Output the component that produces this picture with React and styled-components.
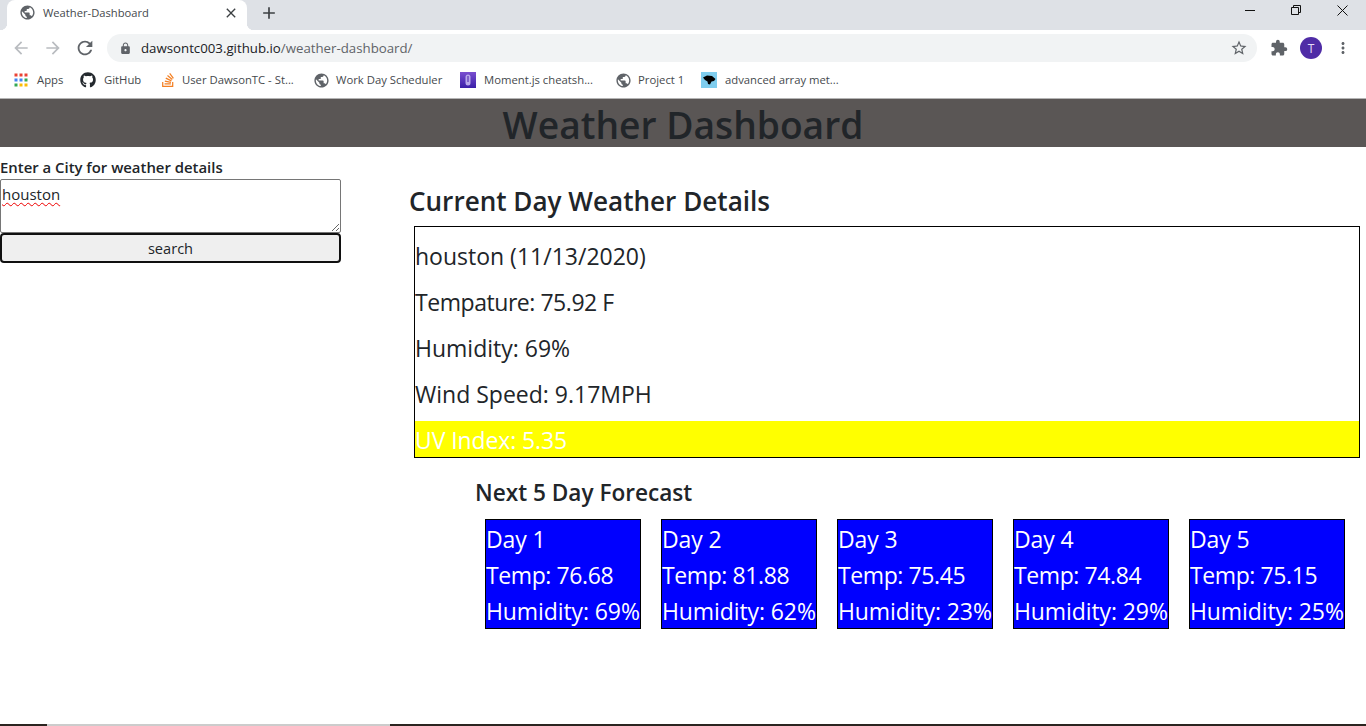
import React from 'react';
import styled, { createGlobalStyle } from 'styled-components';
import { FaGithub, FaStackOverflow } from 'react-icons/fa';
import { MdPublic, MdExtension, MdLock, MdStarBorder, MdRefresh, MdArrowBack, MdArrowForward, MdMoreVert, MdAdd, MdClose } from 'react-icons/md';

const Global = createGlobalStyle`
  html, body { margin: 0; padding: 0; height: 726px; overflow: hidden; background: #fff; }
  * { box-sizing: border-box; }
  body { font-family: "Open Sans", "Noto Sans", sans-serif; color: #212529; }
`;
const Screen = styled.div`display:flex;flex-direction:column;width:1366px;height:726px;overflow:hidden;`;
const TabStrip = styled.div`display:flex;align-items:flex-end;height:30px;background:#dee1e6;padding-left:7px;flex:none;`;
const Tab = styled.div`
  position:relative;display:flex;align-items:center;width:240px;height:30px;background:#fff;border-radius:8px 8px 0 0;padding:0 8px 5px 12px;color:#45494d;font-size:11.2px;
  &::before,&::after{content:"";position:absolute;bottom:0;width:7px;height:7px;}
  &::before{left:-7px;background:radial-gradient(circle at 0 0,transparent 7px,#fff 7.5px);}
  &::after{right:-7px;background:radial-gradient(circle at 100% 0,transparent 7px,#fff 7.5px);}
`;
const TabTitle = styled.span`flex:1;margin-left:7px;`;
const NewTab = styled.div`display:flex;align-items:center;margin:0 0 4px 12px;color:#3c4043;height:26px;`;
const WindowControls = styled.div`margin-left:auto;display:flex;align-self:flex-start;align-items:center;height:20px;padding-right:1px;`;
const WinBtn = styled.div`width:46px;height:20px;display:flex;align-items:center;justify-content:center;`;
const Toolbar = styled.div`display:flex;align-items:center;height:36px;background:#fff;padding:0 0 0 5px;flex:none;`;
const NavBtn = styled.div`display:flex;width:32px;justify-content:center;color:${p => p.$off ? '#b9bcc0' : '#5f6368'};`;
const Address = styled.div`display:flex;align-items:center;width:1150px;height:28px;margin-left:6px;border-radius:14px;background:#f1f3f4;padding:0 9px 0 12px;font-size:13.25px;`;
const Url = styled.span`margin-left:9px;flex:1;color:#202124;`;
const UrlPath = styled.span`color:#5f6368;`;
const Avatar = styled.div`width:22px;height:22px;border-radius:50%;background:#4f2ca6;color:#e6dcf8;font-size:12px;display:flex;align-items:center;justify-content:center;margin:0 12px 0 12px;`;
const ExtBtn = styled.div`display:flex;color:#5f6368;margin-left:${p => p.$ml || 0}px;`;
const Bookmarks = styled.div`display:flex;align-items:center;height:33px;background:#fff;padding:0 0 4px 14px;border-bottom:1px solid #b4b4b4;flex:none;font-size:11.3px;color:#45494d;`;
const Bookmark = styled.div`display:flex;align-items:center;gap:${p => p.$gap || 8}px;width:${p => p.$w}px;white-space:nowrap;flex:none;`;
const BookmarkLabel = styled.span`margin-bottom:2px;`;
const Main = styled.div`flex:1;display:flex;flex-direction:column;min-height:0;`;
const Banner = styled.header`height:48px;background:#5a5655;flex:none;text-align:center;`;
const H1 = styled.h1`margin:0;font-size:37.2px;font-weight:600;line-height:52px;color:#212529;`;
const Columns = styled.div`display:flex;flex:1;min-height:0;`;
const Side = styled.aside`width:341px;flex:none;padding-top:9px;`;
const Label = styled.label`display:block;font-size:14.9px;font-weight:600;line-height:22px;margin-bottom:1px;`;
const Input = styled.textarea`display:block;width:341px;height:54px;margin:0;padding:4px 1px 2px;border:1px solid #767676;border-radius:2px;font:15px/20px "Open Sans",sans-serif;color:#212529;text-decoration:underline wavy #e00 1px;text-underline-offset:2px;outline:none;`;
const SearchBtn = styled.button`display:block;width:341px;height:30px;margin:0;padding:0;background:#efefef;border:2px solid #101010;border-radius:4px;font:14.6px "Open Sans",sans-serif;color:#212529;`;
const Content = styled.section`flex:1;padding:0 6px 0 68px;`;
const H3 = styled.h3`margin:35px 0 6px;font-size:26.1px;font-weight:600;line-height:38px;`;
const Details = styled.div`margin-left:5px;height:232px;border:1px solid #000;padding-top:10px;overflow:hidden;`;
const Line = styled.div`font-size:23px;height:36px;line-height:38px;margin-bottom:10px;letter-spacing:${p => p.$ls || 0}px;`;
const UvLine = styled(Line)`background:#ff0;color:#fff;margin:0;letter-spacing:-.1px;`;
const Forecast = styled.div`padding-left:66px;`;
const H4 = styled.h4`margin:19px 0 10px;font-size:22.6px;font-weight:600;line-height:32px;`;
const Cards = styled.div`display:flex;gap:20px;margin-left:10px;`;
const Card = styled.div`width:156px;height:110px;padding-top:1px;background:#00f;border:1px solid #000;color:#fff;font-size:23px;letter-spacing:-.1px;line-height:36px;white-space:nowrap;overflow:hidden;`;
const CardTemp = styled.div`letter-spacing:-.4px;`;
const Taskbar = styled.div`height:2px;flex:none;background:#2b2520;display:flex;`;
const TaskGap = styled.div`width:343px;margin-left:47px;background:#ccc;`;
const AppsGrid = styled.svg`width:14px;height:14px;flex:none;`;

const colors = ['#ea4335','#ea4335','#ea4335','#4285f4','#4285f4','#34a853','#34a853','#fbbc05','#fbbc05'];
const Apps = () => (
  <AppsGrid viewBox="0 0 14 14">
    {colors.map((c, i) => <rect key={i} x={(i % 3) * 5 + .5} y={Math.floor(i / 3) * 5 + .5} width="3" height="3" fill={c} />)}
  </AppsGrid>
);
const Moment = () => (
  <svg width="16" height="16" viewBox="0 0 16 16" style={{flex:'none'}}>
    <defs><linearGradient id="mg" x1="0" y1="0" x2="0" y2="1"><stop offset="0" stopColor="#7a4fd0"/><stop offset="1" stopColor="#3a1fa8"/></linearGradient></defs>
    <rect width="16" height="16" fill="url(#mg)"/><rect x="5.5" y="2.5" width="5" height="11" rx="2.5" fill="#b8a8ea"/><rect x="7.4" y="4" width="1.2" height="6" fill="#5a35b5"/>
  </svg>
);
const Panther = () => (
  <svg width="16" height="16" viewBox="0 0 16 16" style={{flex:'none'}}><rect width="16" height="16" fill="#7fcdee"/><path d="M2 5.5 6 3.5 11 4 14.5 7 13 9 10.5 9.5 9 12.5 7 12 6.5 9.5 4 8Z" fill="#000"/></svg>
);

const days = [['Day 1','76.68','69'],['Day 2','81.88','62'],['Day 3','75.45','23'],['Day 4','74.84','29'],['Day 5','75.15','25']];

export default function App() {
  return (
    <Screen>
      <Global />
      <TabStrip>
        <Tab>
          <MdPublic size={17} color="#5f6368" />
          <TabTitle>Weather-Dashboard</TabTitle>
          <MdClose size={16} color="#3c4043" />
        </Tab>
        <NewTab><MdAdd size={20} /></NewTab>
        <WindowControls>
          <WinBtn><svg width="10" height="10" viewBox="0 0 10 10"><path d="M0 5.5H10" stroke="#111"/></svg></WinBtn>
          <WinBtn><svg width="10" height="10" viewBox="0 0 10 10"><path d="M.5 2.5H7.5V9.5H.5ZM2.5 2.5V.5H9.5V7.5H7.5" fill="none" stroke="#111"/></svg></WinBtn>
          <WinBtn><svg width="11" height="11" viewBox="0 0 11 11"><path d="M.5.5 10.5 10.5M10.5.5.5 10.5" stroke="#111"/></svg></WinBtn>
        </WindowControls>
      </TabStrip>
      <Toolbar>
        <NavBtn $off><MdArrowBack size={20} /></NavBtn>
        <NavBtn $off><MdArrowForward size={20} /></NavBtn>
        <NavBtn><MdRefresh size={22} /></NavBtn>
        <Address>
          <MdLock size={13} color="#5f6368" />
          <Url>dawsontc003.github.io<UrlPath>/weather-dashboard/</UrlPath></Url>
          <MdStarBorder size={18} color="#5f6368" />
        </Address>
        <ExtBtn $ml={13}><MdExtension size={18} /></ExtBtn>
        <Avatar>T</Avatar>
        <ExtBtn><MdMoreVert size={18} /></ExtBtn>
      </Toolbar>
      <Bookmarks>
        <Bookmark $w={66} $gap={9}><Apps /><BookmarkLabel>Apps</BookmarkLabel></Bookmark>
        <Bookmark $w={80}><FaGithub size={16} color="#24292e" /><BookmarkLabel>GitHub</BookmarkLabel></Bookmark>
        <Bookmark $w={153} $gap={6}><FaStackOverflow size={16} color="#f48024" /><BookmarkLabel>User DawsonTC - St...</BookmarkLabel></Bookmark>
        <Bookmark $w={147} $gap={6}><MdPublic size={17} color="#5f6368" /><BookmarkLabel>Work Day Scheduler</BookmarkLabel></Bookmark>
        <Bookmark $w={155}><Moment /><BookmarkLabel>Moment.js cheatsh...</BookmarkLabel></Bookmark>
        <Bookmark $w={86} $gap={6}><MdPublic size={17} color="#5f6368" /><BookmarkLabel>Project 1</BookmarkLabel></Bookmark>
        <Bookmark $w={150}><Panther /><BookmarkLabel>advanced array met...</BookmarkLabel></Bookmark>
      </Bookmarks>
      <Main>
        <Banner><H1>Weather Dashboard</H1></Banner>
        <Columns>
          <Side>
            <Label>Enter a City for weather details</Label>
            <Input readOnly value="houston" spellCheck={false} />
            <SearchBtn>search</SearchBtn>
          </Side>
          <Content>
            <H3>Current Day Weather Details</H3>
            <Details>
              <Line>houston (11/13/2020)</Line>
              <Line $ls={-0.45}>Tempature: 75.92 F</Line>
              <Line>Humidity: 69%</Line>
              <Line>Wind Speed: 9.17MPH</Line>
              <UvLine>UV Index: 5.35</UvLine>
            </Details>
            <Forecast>
              <H4>Next 5 Day Forecast</H4>
              <Cards>
                {days.map(([d, t, h]) => (
                  <Card key={d}>
                    <div>{d}</div>
                    <CardTemp>Temp: {t}</CardTemp>
                    <div>Humidity: {h}%</div>
                  </Card>
                ))}
              </Cards>
            </Forecast>
          </Content>
        </Columns>
      </Main>
      <Taskbar><TaskGap /></Taskbar>
    </Screen>
  );
}
